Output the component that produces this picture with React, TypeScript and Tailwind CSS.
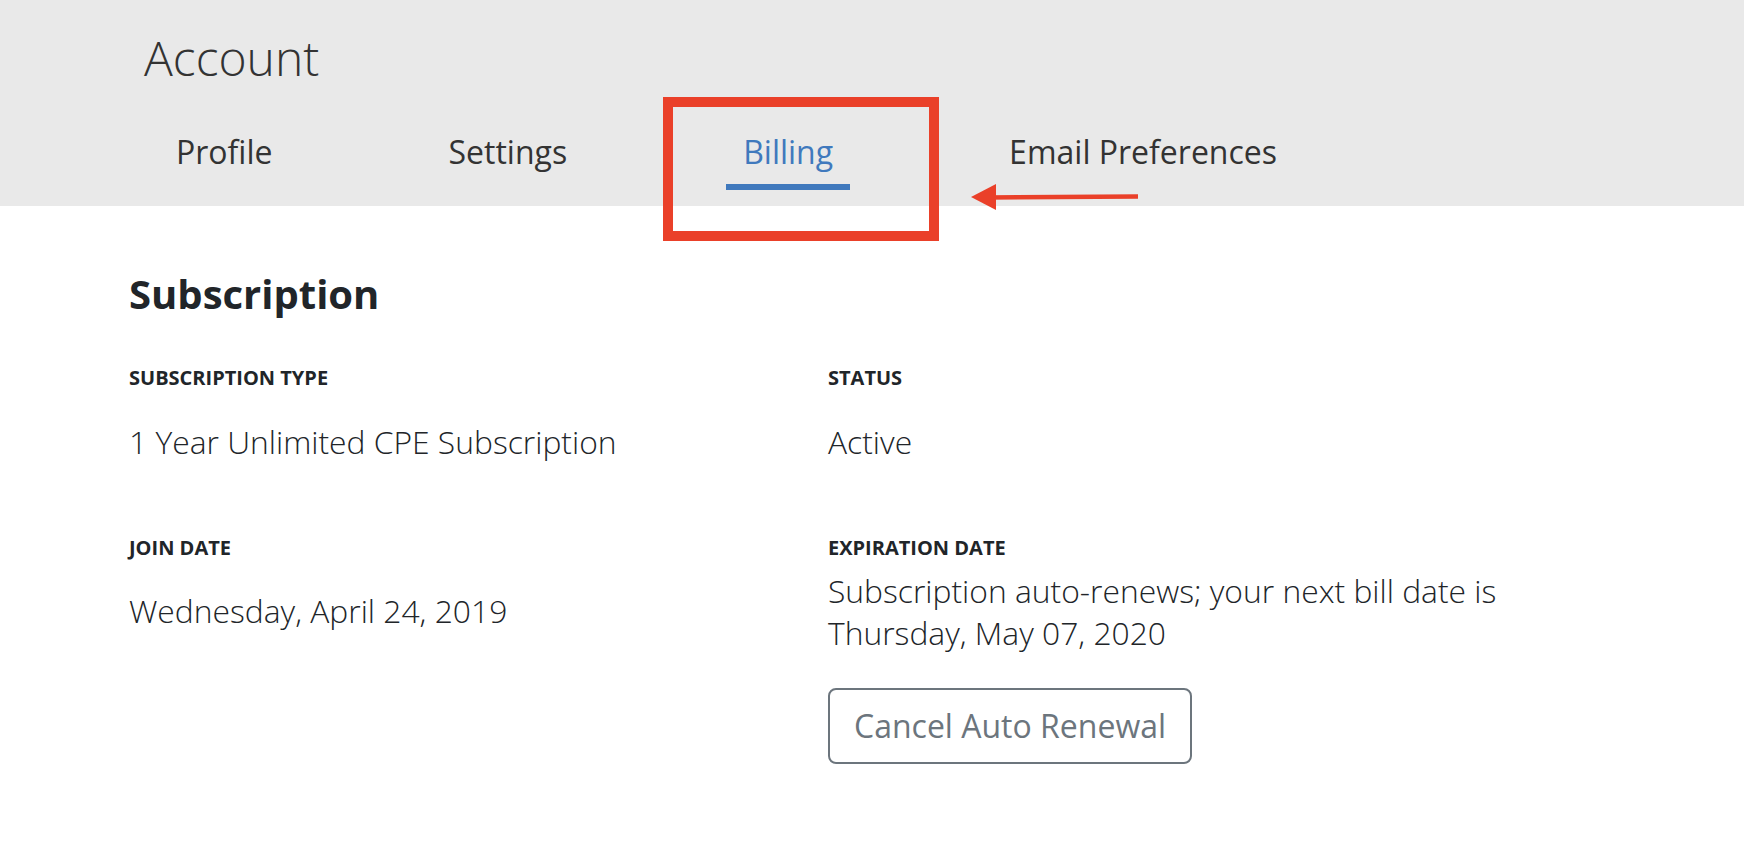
import clsx from "clsx";

const tabs = ["Profile", "Settings", "Billing", "Email Preferences"];
const activeTab = "Billing";

function Label({ children }: { children: React.ReactNode }) {
  return (
    <div className="text-[20px] leading-[24px] font-bold text-[#212529]">
      {children}
    </div>
  );
}

export default function App() {
  return (
    <div className="relative min-h-screen bg-white font-['Open_Sans',sans-serif] text-[#212529]">
      <header className="h-[206px] bg-[#e9e9e9] pt-[29px] pl-[144px]">
        <h1 className="text-[48px] leading-[58px] font-light text-[#333]">Account</h1>
        <nav className="mt-[41px] ml-[15px] flex gap-[142px]">
          {tabs.map((tab) => (
            <a
              key={tab}
              className={clsx(
                "border-b-[6px] px-[17px] pb-[8px] text-[32px] leading-[48px]",
                tab === activeTab
                  ? "border-[#4079bd] text-[#4079bd]"
                  : "border-transparent text-[#333]"
              )}
            >
              {tab}
            </a>
          ))}
        </nav>
      </header>

      <main className="pl-[129px] pt-[64px]">
        <h2 className="text-[40px] leading-[48px] font-bold">Subscription</h2>

        <div className="mt-[48px] grid grid-cols-[699px_1fr]">
          <div>
            <Label>SUBSCRIPTION TYPE</Label>
            <p className="mt-[31px] text-[31.8px] leading-[42px] font-light">
              1 Year Unlimited CPE Subscription
            </p>
          </div>
          <div>
            <Label>STATUS</Label>
            <p className="mt-[31px] text-[31.8px] leading-[42px] font-light">Active</p>
          </div>
        </div>

        <div className="mt-[73px] grid grid-cols-[699px_1fr]">
          <div>
            <Label>JOIN DATE</Label>
            <p className="mt-[30px] text-[31.8px] leading-[42px] font-light">
              Wednesday, April 24, 2019
            </p>
          </div>
          <div>
            <Label>EXPIRATION DATE</Label>
            <p className="mt-[10px] text-[31.8px] leading-[42px] font-light">
              Subscription auto-renews; your next bill date is
              <br />
              Thursday, May 07, 2020
            </p>
            <button className="mt-[34px] rounded-[8px] border-2 border-[#6c757d] px-[24px] py-[12px] text-[32px] leading-[48px] text-[#6c757d]">
              Cancel Auto Renewal
            </button>
          </div>
        </div>
      </main>

      {/* annotation: red box + arrow */}
      <div className="absolute left-[663px] top-[97px] h-[144px] w-[276px] border-[10px] border-[#ea4029]" />
      <svg
        className="absolute left-[968px] top-[182px]"
        width="172"
        height="30"
        viewBox="0 0 172 30"
      >
        <line x1="20" y1="15.5" x2="170" y2="14.5" stroke="#ea4029" strokeWidth="4.5" />
        <polygon points="3,15 28,2 28,28" fill="#ea4029" />
      </svg>
    </div>
  );
}
